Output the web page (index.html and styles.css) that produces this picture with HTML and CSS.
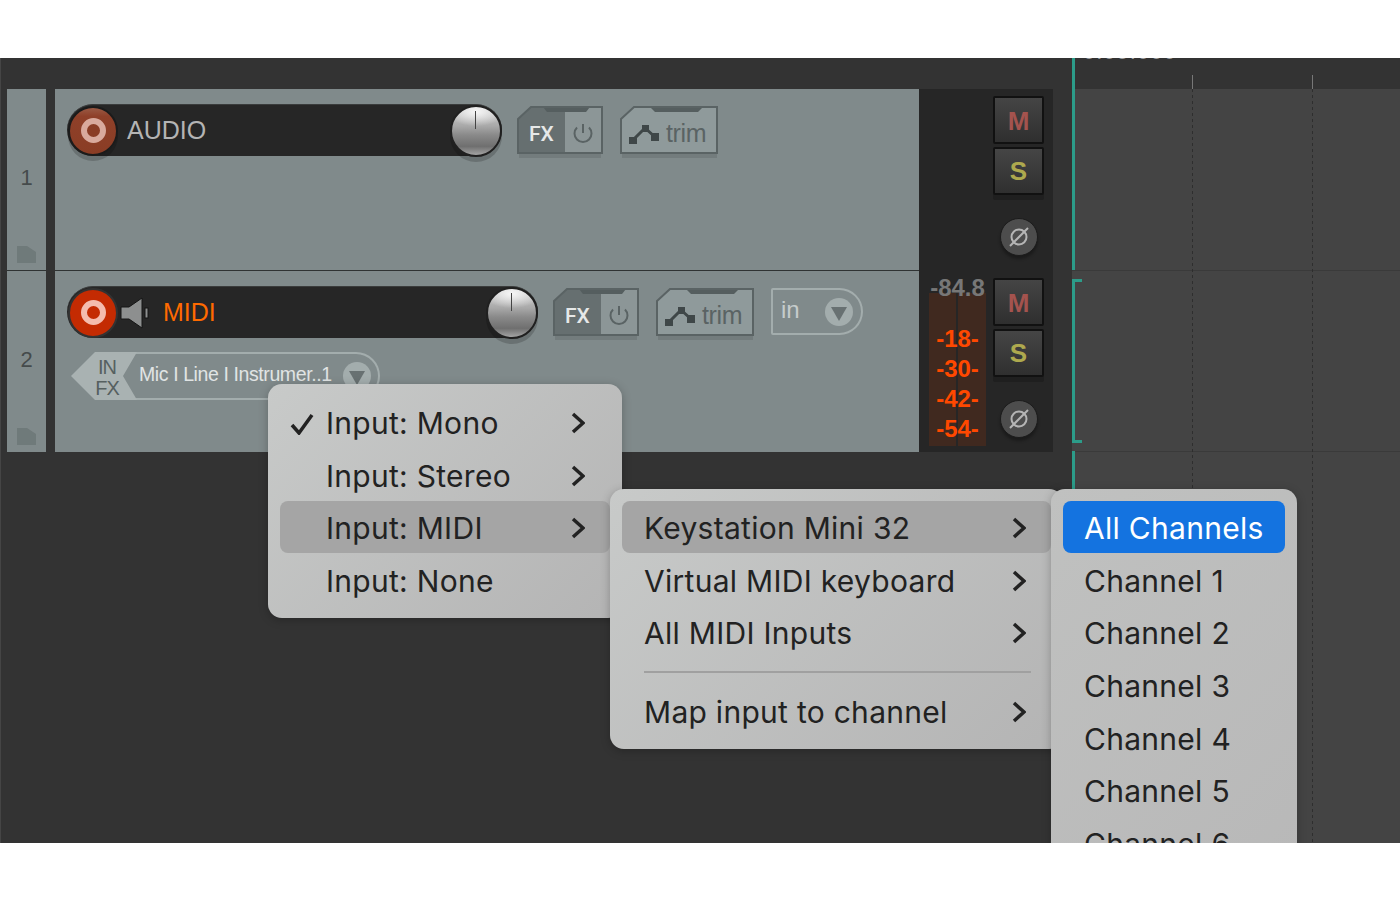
FILE: index.html
```html
<!DOCTYPE html>
<html lang="en">
<head>
    <meta charset="UTF-8">
    <title>Track input menu</title>
    <link rel="stylesheet" href="styles.css">
</head>
<body>
    <div class="app">
        <div class="tcp">
            <!-- track 1 -->
            <div class="track track-first">
                <div class="track-num">
                    <span>1</span>
                    <svg class="folder" width="20" height="17" viewBox="0 0 20 17"><path d="M0 0H10L19 6V17H0Z"/></svg>
                </div>
                <div class="track-main">
                    <div class="track-row">
                        <div class="pill pill-audio">
                            <div class="rec rec-off"><i></i></div>
                            <span class="track-name">AUDIO</span>
                            <div class="knob"></div>
                        </div>
                        <svg class="tbtn fx" width="86" height="52" viewBox="0 0 86 52">
                            <rect class="btn-shadow" x="2" y="47" width="82" height="5"/>
                            <polygon class="fx-right" points="48,1 85,1 85,47 48,47"/>
                            <polygon class="fx-left" points="1,13 14,1 48,1 48,47 1,47"/>
                            <polygon class="btn-notch" points="26,1 30,6 69,6 73,1"/>
                            <polygon class="btn-edge" points="1,13 14,1 85,1 85,47 1,47"/>
                            <text class="fx-label" x="12" y="35">FX</text>
                            <path class="power" d="M60 21.500A8.500 8.500 0 1 0 72 21.500M66 18V27"/>
                        </svg>
                        <svg class="tbtn trim" width="98" height="52" viewBox="0 0 98 52">
                            <rect class="btn-shadow" x="2" y="47" width="95" height="5"/>
                            <polygon class="trim-body" points="1,13 14,1 97,1 97,47 1,47"/>
                            <polygon class="btn-notch" points="30,1 35,6 78,6 83,1"/>
                            <polygon class="btn-edge" points="1,13 14,1 97,1 97,47 1,47"/>
                            <path class="env-line" d="M13 34L25 22L35 31"/>
                            <path class="env-dots" d="M9 31h8v7h-8zM22 19h7v7h-7zM31 27h8v8h-8z"/>
                            <text class="trim-label" x="46" y="36">trim</text>
                        </svg>
                    </div>
                </div>
                <div class="meter-col">
                    <div class="meter-space"></div>
                    <div class="ms">
                        <div class="ms-btn mute">M</div>
                        <div class="ms-btn solo">S</div>
                        <div class="phase">
                            <svg width="24" height="24" viewBox="0 0 24 24"><circle cx="12" cy="12" r="7.500"/><path d="M3 21L21 3"/></svg>
                        </div>
                    </div>
                </div>
            </div>

            <!-- track 2 -->
            <div class="track">
                <div class="track-num">
                    <span>2</span>
                    <svg class="folder" width="20" height="17" viewBox="0 0 20 17"><path d="M0 0H10L19 6V17H0Z"/></svg>
                </div>
                <div class="track-main">
                    <div class="track-row">
                        <div class="pill pill-midi">
                            <div class="rec rec-on"><i></i></div>
                            <svg class="speaker" width="29" height="32" viewBox="0 0 29 32">
                                <path d="M1 10H9L22 1V31L9 22H1Z"/>
                                <rect x="25" y="11" width="3" height="10"/>
                            </svg>
                            <span class="track-name track-name-midi">MIDI</span>
                            <div class="knob"></div>
                        </div>
                        <svg class="tbtn fx" width="86" height="52" viewBox="0 0 86 52">
                            <rect class="btn-shadow" x="2" y="47" width="82" height="5"/>
                            <polygon class="fx-right" points="48,1 85,1 85,47 48,47"/>
                            <polygon class="fx-left" points="1,13 14,1 48,1 48,47 1,47"/>
                            <polygon class="btn-notch" points="26,1 30,6 69,6 73,1"/>
                            <polygon class="btn-edge" points="1,13 14,1 85,1 85,47 1,47"/>
                            <text class="fx-label" x="12" y="35">FX</text>
                            <path class="power" d="M60 21.500A8.500 8.500 0 1 0 72 21.500M66 18V27"/>
                        </svg>
                        <svg class="tbtn trim" width="98" height="52" viewBox="0 0 98 52">
                            <rect class="btn-shadow" x="2" y="47" width="95" height="5"/>
                            <polygon class="trim-body" points="1,13 14,1 97,1 97,47 1,47"/>
                            <polygon class="btn-notch" points="30,1 35,6 78,6 83,1"/>
                            <polygon class="btn-edge" points="1,13 14,1 97,1 97,47 1,47"/>
                            <path class="env-line" d="M13 34L25 22L35 31"/>
                            <path class="env-dots" d="M9 31h8v7h-8zM22 19h7v7h-7zM31 27h8v8h-8z"/>
                            <text class="trim-label" x="46" y="36">trim</text>
                        </svg>
                        <div class="in-btn">
                            <span>in</span>
                            <svg width="28" height="28" viewBox="0 0 28 28"><circle cx="14" cy="14" r="14"/><polygon points="6,9 22,9 14,23"/></svg>
                        </div>
                    </div>
                    <div class="input-row">
                        <div class="input-tag"><span>IN</span><span>FX</span></div>
                        <div class="input-name">
                            <span>Mic I Line I Instrumer..1</span>
                            <svg width="28" height="28" viewBox="0 0 28 28"><circle cx="14" cy="14" r="14"/><polygon points="6,9 22,9 14,23"/></svg>
                        </div>
                    </div>
                </div>
                <div class="meter-col">
                    <div class="meter">
                        <div class="peak">-84.8</div>
                        <div class="db">-18-</div>
                        <div class="db">-30-</div>
                        <div class="db">-42-</div>
                        <div class="db">-54-</div>
                    </div>
                    <div class="ms">
                        <div class="ms-btn mute">M</div>
                        <div class="ms-btn solo">S</div>
                        <div class="phase">
                            <svg width="24" height="24" viewBox="0 0 24 24"><circle cx="12" cy="12" r="7.500"/><path d="M3 21L21 3"/></svg>
                        </div>
                    </div>
                </div>
            </div>
        </div>

        <div class="arrange">
            <div class="ruler"><span class="time">0:05.000</span></div>
            <div class="lane"></div>
            <div class="lane"></div>
            <div class="grid-line grid-a"></div>
            <div class="grid-line grid-b"></div>
            <div class="cursor cursor-top"></div>
            <div class="bracket"></div>
            <div class="cursor cursor-low"></div>
        </div>

        <!-- menus -->
        <div class="menu menu-input">
            <div class="item">
                <svg class="check" width="24" height="22" viewBox="0 0 24 22"><path d="M2 12L9 20L22 2"/></svg>
                <span>Input: Mono</span>
                <svg class="chev" width="14" height="22" viewBox="0 0 14 22"><path d="M2 2L12 11L2 20"/></svg>
            </div>
            <div class="item">
                <span>Input: Stereo</span>
                <svg class="chev" width="14" height="22" viewBox="0 0 14 22"><path d="M2 2L12 11L2 20"/></svg>
            </div>
            <div class="item item-open">
                <span>Input: MIDI</span>
                <svg class="chev" width="14" height="22" viewBox="0 0 14 22"><path d="M2 2L12 11L2 20"/></svg>
            </div>
            <div class="item">
                <span>Input: None</span>
            </div>
        </div>

        <div class="menu menu-midi">
            <div class="item item-open">
                <span>Keystation Mini 32</span>
                <svg class="chev" width="14" height="22" viewBox="0 0 14 22"><path d="M2 2L12 11L2 20"/></svg>
            </div>
            <div class="item">
                <span>Virtual MIDI keyboard</span>
                <svg class="chev" width="14" height="22" viewBox="0 0 14 22"><path d="M2 2L12 11L2 20"/></svg>
            </div>
            <div class="item">
                <span>All MIDI Inputs</span>
                <svg class="chev" width="14" height="22" viewBox="0 0 14 22"><path d="M2 2L12 11L2 20"/></svg>
            </div>
            <div class="sep"></div>
            <div class="item">
                <span>Map input to channel</span>
                <svg class="chev" width="14" height="22" viewBox="0 0 14 22"><path d="M2 2L12 11L2 20"/></svg>
            </div>
        </div>

        <div class="menu menu-channels">
            <div class="item item-active"><span>All Channels</span></div>
            <div class="item"><span>Channel 1</span></div>
            <div class="item"><span>Channel 2</span></div>
            <div class="item"><span>Channel 3</span></div>
            <div class="item"><span>Channel 4</span></div>
            <div class="item"><span>Channel 5</span></div>
            <div class="item"><span>Channel 6</span></div>
        </div>
    </div>
</body>
</html>
```

FILE: styles.css
```css
* {
    box-sizing: border-box;
}
body {
    margin: 0;
    background-color: white;
    font-family: "Liberation Sans", Arial, sans-serif;
}
.app {
    position: relative;
    display: flex;
    height: 785px;
    margin-top: 58px;
    overflow: hidden;
    background-color: #333;
    border-left: 1px solid #454545;
}

/* track control panel */
.tcp {
    width: 1071px;
    padding: 31px 0 0 6px;
}
.track {
    display: flex;
    height: 181px;
}
.track-first {
    height: 182px;
}
.track-first .track-num,
.track-first .track-main {
    border-bottom: 1px solid #2f3333;
}
.track-num {
    display: flex;
    flex-direction: column;
    align-items: center;
    justify-content: space-between;
    width: 39px;
    margin-right: 9px;
    padding: 76px 0 7px;
    background-color: #808a8b;
    color: #454b4c;
    font-size: 22px;
}
.folder {
    fill: #6f7a7a;
}
.track-main {
    width: 864px;
    padding: 15px 12px 0;
    background-color: #808a8b;
}
.track-row {
    display: flex;
    align-items: flex-start;
}
.pill {
    display: flex;
    align-items: center;
    height: 52px;
    padding: 0 1px;
    border-radius: 26px;
    background-color: #262626;
    border-top: 1px solid #3a3c3c;
}
.pill-audio {
    width: 435px;
}
.pill-midi {
    width: 471px;
}
.rec {
    display: flex;
    align-items: center;
    justify-content: center;
    width: 50px;
    height: 50px;
    flex-shrink: 0;
    border-radius: 50%;
    border: 2px solid #1b1b1b;
    box-shadow: 0 5px 0 rgba(0,0,0,0.18);
}
.rec i {
    display: block;
    width: 25px;
    height: 25px;
    border-radius: 50%;
    border-width: 6px;
    border-style: solid;
}
.rec-off {
    background: linear-gradient(#9a5a45 0, #8f4029 18%, #8a3d25 100%);
}
.rec-off i {
    border-color: #d9aa9d;
    background-color: #8a3d25;
}
.rec-on {
    background-color: #c42b02;
    box-shadow: none;
    border-color: #333;
}
.rec-on i {
    border-color: #f4bcae;
    background-color: #c42b02;
}
.speaker {
    margin-left: 2px;
    fill: #8d8f8f;
    stroke: #151515;
}
.track-name {
    margin-left: 9px;
    color: #b4b4b4;
    font-size: 25px;
}
.track-name-midi {
    margin-left: 14px;
    color: #ff6a00;
}
.knob {
    position: relative;
    width: 52px;
    height: 52px;
    margin-left: auto;
    margin-right: -1px;
    flex-shrink: 0;
    border-radius: 50%;
    border: 2px solid #202020;
    background:
        radial-gradient(ellipse 60% 30% at 50% 10%, #f6f6f6, rgba(246,246,246,0) 100%),
        linear-gradient(#d4d4d4 0, #a8a8a8 40%, #8a8a8a 58%, #6f6f6f 82%, #a4a4a4 100%);
    box-shadow: 0 5px 0 rgba(0,0,0,0.18);
}
.knob::after {
    content: "";
    position: absolute;
    left: 23px;
    top: 4px;
    width: 1px;
    height: 18px;
    background-color: #444;
}

/* fx and trim buttons */
.tbtn {
    flex-shrink: 0;
    margin-top: 2px;
}
.fx {
    margin-left: 15px;
}
.trim {
    margin-left: 17px;
}
.btn-shadow {
    fill: #737c7d;
}
.btn-notch {
    fill: #555e5f;
}
.btn-edge {
    fill: none;
    stroke: #5a6364;
    stroke-width: 2;
}
.fx-left {
    fill: #666f70;
}
.fx-right {
    fill: #8c9697;
}
.trim-body {
    fill: #8f9a9b;
}
.fx-label {
    fill: #e6e8e8;
    font-family: Roboto, sans-serif;
    font-size: 21px;
    font-weight: 500;
}
.trim-label {
    fill: #5a6364;
    font-size: 25px;
    letter-spacing: -0.4px;
}
.power {
    fill: none;
    stroke: #5a6364;
    stroke-width: 2;
}
.env-line {
    fill: none;
    stroke: #3f4748;
    stroke-width: 3;
}
.env-dots {
    fill: #3f4748;
}
.in-btn {
    display: flex;
    align-items: center;
    justify-content: space-between;
    width: 92px;
    height: 47px;
    margin: 2px 0 0 17px;
    padding: 0 8px;
    border: 2px solid #a3adad;
    border-radius: 2px 24px 24px 2px;
    color: #c6cccc;
    font-size: 24px;
}
.in-btn span {
    margin-top: -4px;
}
.in-btn svg circle,
.input-name svg circle {
    fill: #a3adad;
}
.in-btn svg polygon,
.input-name svg polygon {
    fill: #687172;
}

/* input selector */
.input-row {
    display: flex;
    height: 48px;
    margin: 12px 0 0 4px;
}
.input-tag {
    display: flex;
    flex-direction: column;
    align-items: center;
    justify-content: center;
    width: 66px;
    padding: 4px 0 0 6px;
    background-color: #a9b2b2;
    clip-path: polygon(0 50%, 24px 0, 66px 0, 52px 50%, 66px 100%, 24px 100%);
    color: #566060;
    font-size: 20px;
    line-height: 21px;
    letter-spacing: -1px;
}
.input-name {
    display: flex;
    align-items: center;
    width: 244px;
    margin-left: -1px;
    padding: 0 7px 0 3px;
    justify-content: space-between;
    border: 2px solid #a3adad;
    border-left: none;
    border-radius: 0 24px 24px 0;
    color: #e0e4e4;
    font-size: 19.5px;
    letter-spacing: -0.4px;
    white-space: nowrap;
}
.input-name span {
    margin-top: -4px;
}

/* meters and mute / solo */
.meter-col {
    display: flex;
    width: 134px;
    padding: 7px 9px 0 10px;
    background-color: #262626;
}
.meter-space {
    width: 64px;
}
.meter {
    width: 57px;
    height: 153px;
    margin: 15px 7px 0 0;
    text-align: center;
    font-weight: bold;
    background: linear-gradient(to right, #40291f 27px, #262626 27px, #262626 29px, #40291f 29px);
}
.peak {
    margin: -17px -3px 24px;
    color: #777;
    font-size: 24px;
    line-height: 24px;
}
.db {
    color: #ff4800;
    font-size: 24px;
    line-height: 30px;
}
.ms {
    display: flex;
    flex-direction: column;
    align-items: center;
    width: 51px;
}
.ms-btn {
    display: flex;
    align-items: center;
    justify-content: center;
    width: 51px;
    height: 48px;
    margin-bottom: 3px;
    border: 2px solid #111;
    border-radius: 2px;
    background: linear-gradient(#454545, #2f2f2f);
    font-size: 26px;
    font-weight: bold;
}
.mute {
    padding-top: 2px;
    color: #a4534e;
}
.solo {
    color: #aea94e;
    box-shadow: 0 5px 0 #1f1f1f;
}
.phase {
    display: flex;
    align-items: center;
    justify-content: center;
    width: 38px;
    height: 38px;
    margin-top: 20px;
    border-radius: 50%;
    border: 1px solid #1c1c1c;
    background-color: #4d4d4d;
    box-shadow: 0 3px 3px rgba(0,0,0,0.3);
}
.phase svg {
    fill: none;
    stroke: #b5b5b5;
    stroke-width: 2;
}

/* arrange view */
.arrange {
    position: relative;
    flex: 1;
    background-color: #444;
}
.ruler {
    height: 31px;
    overflow: hidden;
    background-color: #333;
}
.time {
    display: block;
    margin: -17px 0 0 11px;
    color: #a0a0a0;
    font-size: 22px;
    line-height: 22px;
    letter-spacing: 1px;
}
.lane {
    height: 181px;
    background-color: #444;
    border-bottom: 1px solid #3a3a3a;
}
.lane:nth-child(2) {
    height: 182px;
}
.grid-line {
    position: absolute;
    top: 31px;
    bottom: 0;
    width: 1px;
    background: repeating-linear-gradient(#2e2e2e 0, #2e2e2e 3px, transparent 3px, transparent 6px);
}
.grid-line::before {
    content: "";
    position: absolute;
    left: 0;
    top: -14px;
    width: 1px;
    height: 14px;
    background-color: #777;
}
.grid-a {
    left: 120px;
}
.grid-b {
    left: 240px;
}
.cursor {
    position: absolute;
    left: 0;
    width: 3px;
    background-color: #2c9c89;
}
.cursor-top {
    top: 0;
    height: 212px;
}
.cursor-low {
    top: 393px;
    bottom: 0;
}
.bracket {
    position: absolute;
    left: 0;
    top: 221px;
    width: 10px;
    height: 164px;
    border: 3px solid #2c9c89;
    border-right: none;
}

/* popup menus */
.menu {
    position: absolute;
    padding: 13px 12px 10.4px;
    border-radius: 14px;
    background: linear-gradient(135deg, #c8cac9, #b4b4b4);
    box-shadow: 0 2px 10px rgba(0,0,0,0.25);
    color: #222;
    font-family: Inter, "Liberation Sans", sans-serif;
    font-size: 30px;
    letter-spacing: 0.28px;
}
.menu-input {
    left: 267px;
    top: 326px;
    width: 354px;
    z-index: 1;
}
.menu-midi {
    left: 609px;
    top: 431px;
    width: 453px;
    z-index: 2;
}
.menu-channels {
    left: 1050px;
    top: 431px;
    width: 246px;
    z-index: 3;
    background: linear-gradient(135deg, #c0c1c0, #b8b8b8);
}
.item {
    position: relative;
    display: flex;
    align-items: center;
    justify-content: space-between;
    height: 52.6px;
    padding: 0 25px 0 22px;
    white-space: nowrap;
}
.menu-input .item {
    padding: 0 25px 0 46px;
}
.menu-channels .item {
    padding-left: 21px;
}
.item-open::before,
.item-active::before {
    content: "";
    position: absolute;
    left: 0;
    right: 0;
    top: -1px;
    height: 52px;
    z-index: -1;
    border-radius: 8px;
    background-color: #a5a5a5;
}
.item-active::before {
    background-color: #1473e0;
}
.item-active {
    color: white;
}
.check {
    position: absolute;
    left: 10px;
    top: 16px;
    fill: none;
    stroke: #222;
    stroke-width: 3.500;
}
.chev {
    fill: none;
    stroke: #222;
    stroke-width: 3.500;
}
.sep {
    height: 2px;
    margin: 11.400px 20px 13px 22px;
    background-color: #a0a0a0;
}
```
